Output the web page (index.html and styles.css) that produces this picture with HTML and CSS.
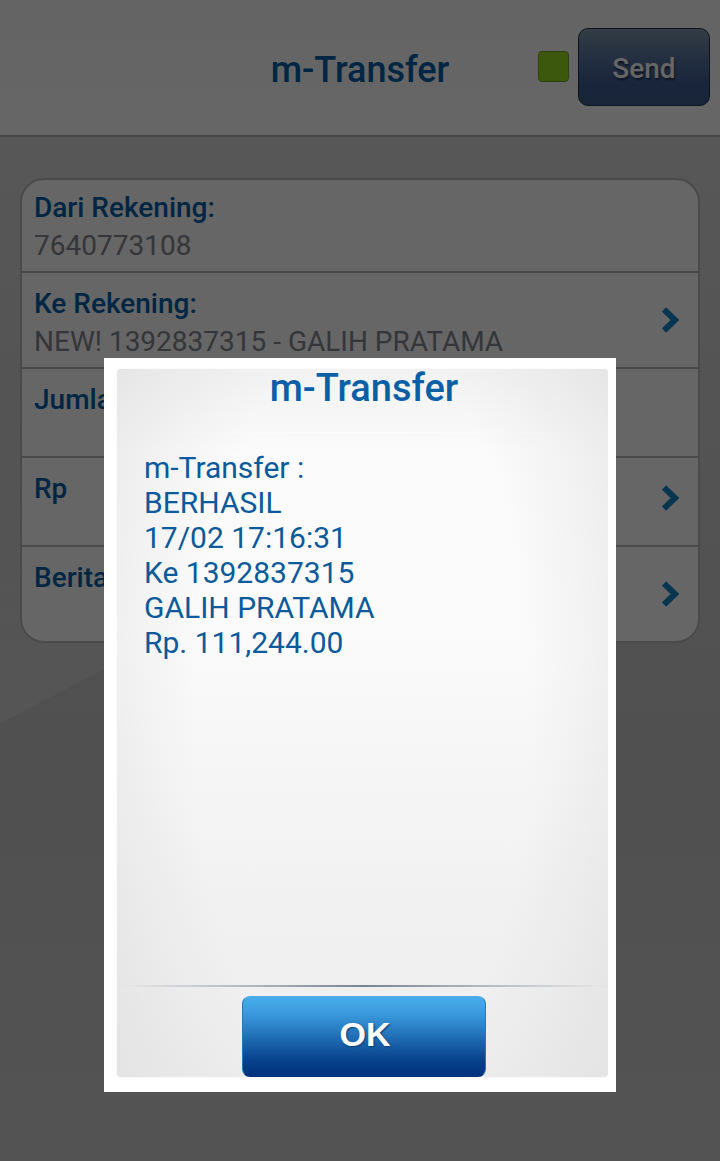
FILE: index.html
```html
<!DOCTYPE html>
<html lang="id">
<head>
<meta charset="utf-8">
<meta name="viewport" content="width=device-width, initial-scale=1">
<title>m-Transfer</title>
<link rel="stylesheet" href="styles.css">
</head>
<body>
<svg class="defs" width="0" height="0" aria-hidden="true">
  <symbol id="chevron" viewBox="0 0 20 28">
    <path d="M3 3.500 14 14 3 24.500" fill="none" stroke="currentColor" stroke-width="6"/>
  </symbol>
</svg>
<div class="screen">
  <svg class="backdrop" viewBox="0 0 720 1024" preserveAspectRatio="none" aria-hidden="true">
    <defs>
      <linearGradient id="sweep" x1="0" y1="0" x2="0" y2="1">
        <stop offset="0" stop-color="#fff" stop-opacity="0"/>
        <stop offset="1" stop-color="#fff" stop-opacity=".22"/>
      </linearGradient>
    </defs>
    <path d="M0 240Q200 220 360 240L360 400 0 586Z" fill="url(#sweep)"/>
  </svg>
  <header class="topbar">
    <h1 class="topbar-title">m-Transfer</h1>
    <div class="topbar-actions">
      <span class="status" role="img" aria-label="Online"></span>
      <button class="send" type="button">Send</button>
    </div>
  </header>
  <main class="content">
    <ul class="form">
      <li class="row">
        <div class="field"><span class="label">Dari Rekening:</span><span class="value">7640773108</span></div>
      </li>
      <li class="row">
        <div class="field"><span class="label">Ke Rekening:</span><span class="value">NEW! 1392837315 - GALIH PRATAMA</span></div>
        <svg class="chevron" aria-hidden="true"><use href="#chevron"/></svg>
      </li>
      <li class="row row-short">
        <div class="field"><span class="label">Jumlah</span></div>
      </li>
      <li class="row row-short">
        <div class="field"><span class="label">Rp</span></div>
        <svg class="chevron" aria-hidden="true"><use href="#chevron"/></svg>
      </li>
      <li class="row">
        <div class="field"><span class="label">Berita</span></div>
        <svg class="chevron" aria-hidden="true"><use href="#chevron"/></svg>
      </li>
    </ul>
  </main>
</div>
<div class="overlay">
  <section class="dialog" role="dialog" aria-modal="true" aria-labelledby="dialog-title">
    <div class="panel">
      <h2 class="dialog-title" id="dialog-title">m-Transfer</h2>
      <p class="message">m-Transfer :<br>BERHASIL<br>17/02 17:16:31<br>Ke 1392837315<br>GALIH PRATAMA<br>Rp. 111,244.00</p>
      <div class="dialog-footer">
        <button class="ok" type="button">OK</button>
      </div>
    </div>
  </section>
</div>
</body>
</html>
```
FILE: styles.css
```css
* { box-sizing: border-box; }

body {
  margin: 0;
  font-family: Roboto, "Liberation Sans", sans-serif;
}

.defs { position: absolute; }

.screen {
  position: relative;
  min-height: 100vh;
  background: linear-gradient(#dadada 136px, #c9c9c9 720px, #c9c9c9 840px, #d0d0d0 100%);
}

.backdrop {
  position: absolute;
  inset: 137px 0 0;
  width: 100%;
  height: calc(100% - 137px);
}

.topbar {
  position: relative;
  display: grid;
  grid-template-columns: 1fr auto 1fr;
  align-items: center;
  min-height: 137px;
  padding: 0 10px 2px;
  background: linear-gradient(#fafafa, #fff);
  border-bottom: 2px solid #b0b0b0;
}

.topbar-title {
  grid-column: 2;
  margin: 6px 0 0;
  font-size: 36px;
  font-weight: 500;
  line-height: 44px;
  color: #005fa8;
}

.topbar-actions {
  display: flex;
  justify-content: flex-end;
  align-items: center;
  gap: 9px;
}

.status {
  width: 31px;
  height: 31px;
  border: 1px solid #7ba41c;
  border-radius: 4px;
  background: #94dc20;
}

.send {
  width: 132px;
  height: 78px;
  padding: 4px 0 0;
  border: 1px solid #1c3450;
  border-radius: 10px;
  background: linear-gradient(#8098ac, #5470a0 45%, #405c94 75%, #405c8c);
  color: #fff;
  font: 500 28px/32px Roboto, sans-serif;
  text-shadow: 1px 2px 2px #203050;
}

.content {
  position: relative;
  padding: 41px 20px;
}

.form {
  margin: 0;
  padding: 0;
  list-style: none;
  background: #fff;
  border: 2px solid #b8b8b8;
  border-radius: 24px;
  overflow: hidden;
}

.row {
  display: flex;
  align-items: center;
  justify-content: space-between;
  min-height: 96px;
  padding: 0 17px 0 12px;
  border-bottom: 2px solid #b8b8b8;
}

.row:first-child { min-height: 93px; }
.row:last-child { min-height: 94px; border-bottom: 0; }
.row-short { min-height: 89px; padding-bottom: 8px; }

.field {
  align-self: flex-start;
  display: flex;
  flex-direction: column;
  padding-top: 12px;
}

.label,
.value {
  font-size: 28px;
  line-height: 38px;
}

.row:first-child .field { padding-top: 9px; }

.label {
  font-weight: 500;
  color: #005fa8;
}

.value { color: #86878e; }

.chevron {
  width: 20px;
  height: 28px;
  color: #1485c8;
}

.overlay {
  position: absolute;
  inset: 0;
  display: flex;
  justify-content: center;
  align-items: flex-start;
  padding: 358px 104px 0;
  background: rgba(0, 0, 0, .6);
}

.dialog {
  flex: 1;
  max-width: 512px;
  padding: 11px 8px 15px 13px;
  background: #fff;
}

.panel {
  display: flex;
  flex-direction: column;
  min-height: 708px;
  padding-left: 3px;
  border-radius: 4px;
  background:
    radial-gradient(ellipse 62% 100% at 50% 50%, rgba(215, 215, 215, 0) 55%, rgba(215, 215, 215, .5)),
    linear-gradient(#f2f2f2, #fbfbfb 12%, #fafafa 40%, #f1f1f1 75%, #eee);
  box-shadow: 0 0 2px #eee;
}

.dialog-title {
  margin: 0;
  padding-bottom: 26px;
  background: linear-gradient(90deg, rgba(255, 255, 255, 0), rgba(255, 255, 255, .6) 50%, rgba(255, 255, 255, 0)) bottom / 100% 1px no-repeat;
  font-size: 38px;
  font-weight: 500;
  line-height: 38px;
  text-align: center;
  color: #0a5fa6;
}

.message {
  flex: 1;
  margin: 0;
  padding: 17px 24px;
  font-size: 30px;
  line-height: 35px;
  color: #0a5a9c;
}

.dialog-footer {
  display: flex;
  justify-content: center;
  padding-top: 11px;
  background: linear-gradient(90deg, rgba(104, 120, 136, 0), #788490 50%, rgba(104, 120, 136, 0)) top / 100% 2px no-repeat;
}

.ok {
  width: 244px;
  height: 81px;
  padding: 0 0 6px 2px;
  border: 1px solid #4a9ad8;
  border-color: #52aee6 #2a78b8 #003080;
  border-radius: 8px;
  background: linear-gradient(#46aeea, #3a98dc 22%, #1c68b0 55%, #07428c 80%, #00327c);
  color: #fff;
  font: bold 34px/40px "Liberation Sans", Arial, sans-serif;
  text-shadow: 1px 1px 2px #103c70;
}
```
